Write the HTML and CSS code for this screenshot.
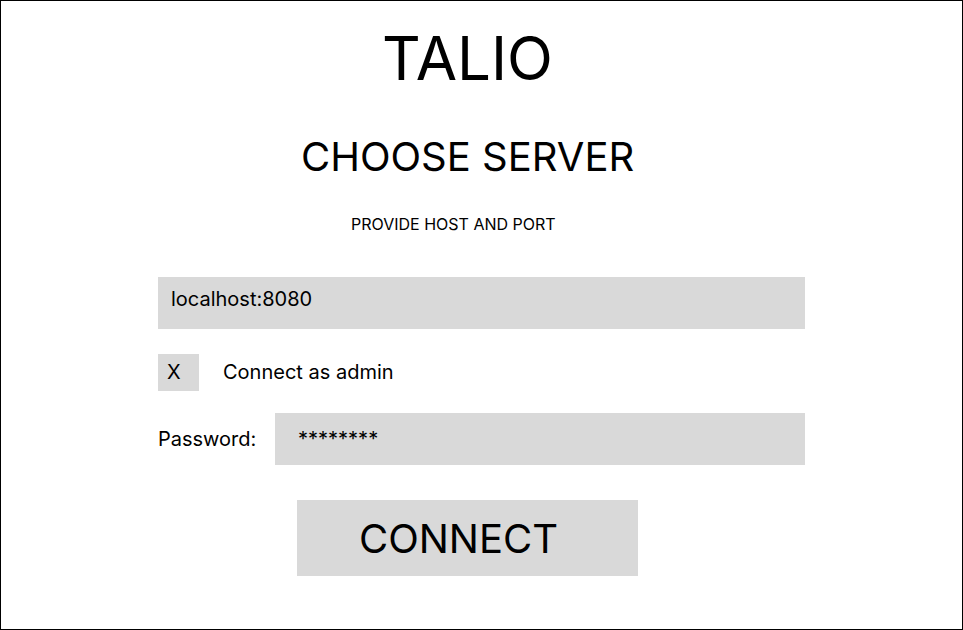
FILE: index.html
```html
<!DOCTYPE html>
<html lang="en">
<head>
    <meta charset="UTF-8">
    <meta name="viewport" content="width=device-width, initial-scale=1.0">
    <title>Talio - Choose Server</title>
    <link rel="stylesheet" href="styles.css">
</head>
<body>
    <div class="frame">
        <h1 class="logo">TALIO</h1>
        <h2 class="title">CHOOSE SERVER</h2>
        <p class="hint">PROVIDE HOST AND PORT</p>

        <div class="field host-field">localhost:8080</div>

        <div class="admin-row">
            <div class="checkbox">X</div>
            <span class="admin-label">Connect as admin</span>
        </div>

        <div class="password-row">
            <span class="password-label">Password:</span>
            <div class="field password-field">********</div>
        </div>

        <button class="connect-btn">CONNECT</button>
    </div>
</body>
</html>
```

FILE: styles.css
```css
body {
    margin: 0;
    font-family: Inter, "Noto Sans", sans-serif;
    background-color: #fff;
    color: #000;
}
.frame {
    width: 963px;
    height: 630px;
    box-sizing: border-box;
    border: 1px solid #000;
    display: flex;
    flex-direction: column;
    align-items: flex-start;
}
.logo {
    margin: 21px 0 0 381px;
    font-size: 60px;
    font-weight: 400;
    line-height: 1.21;
}
.title {
    margin: 38px 0 0 300px;
    font-size: 40px;
    font-weight: 400;
    line-height: 1.21;
}
.hint {
    margin: 34px 0 0 350px;
    font-size: 16px;
    line-height: 1.21;
}
.field {
    background-color: #d9d9d9;
    height: 52px;
    box-sizing: border-box;
    display: flex;
    align-items: center;
    font-size: 20px;
}
.host-field {
    margin: 43px 0 0 157px;
    width: 647px;
    padding: 0 0 9px 13px;
}
.admin-row {
    margin: 25px 0 0 157px;
    display: flex;
    align-items: center;
    gap: 24px;
    font-size: 20px;
}
.checkbox {
    width: 41px;
    height: 37px;
    box-sizing: border-box;
    background-color: #d9d9d9;
    padding: 6px 0 0 9px;
}
.admin-label {
    padding-bottom: 2px;
}
.password-row {
    margin: 22px 0 0 157px;
    display: flex;
    align-items: center;
    font-size: 20px;
}
.password-label {
    width: 117px;
}
.password-field {
    width: 530px;
    padding: 0 0 0 23px;
}
.connect-btn {
    margin: 35px 0 0 296px;
    width: 341px;
    height: 76px;
    border: none;
    background-color: #d9d9d9;
    font-family: Inter, "Noto Sans", sans-serif;
    font-size: 40px;
    color: #000;
    padding: 0 18px 0 0;
}
```
